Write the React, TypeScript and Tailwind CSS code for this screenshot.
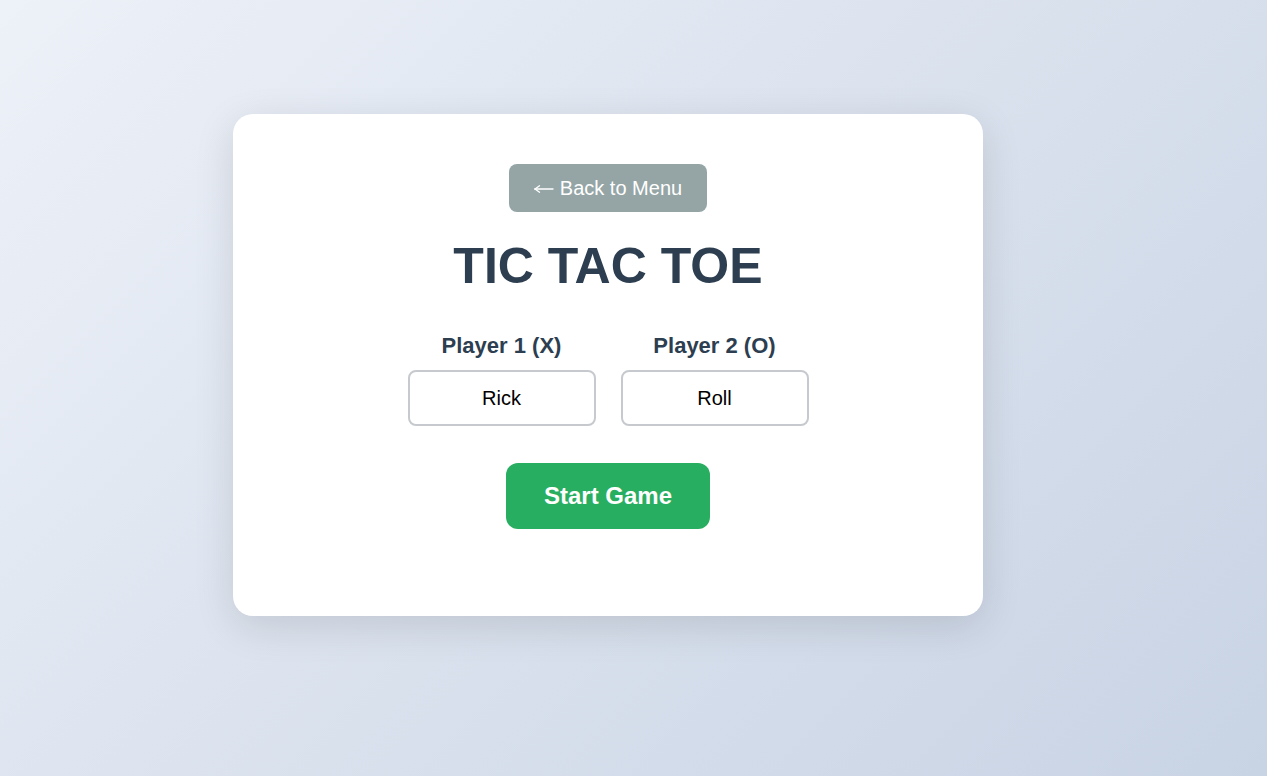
import React, { useState } from 'react';

const App = () => {
  const [p1, setP1] = useState('Rick');
  const [p2, setP2] = useState('Roll');

  return (
    <div className="min-h-screen w-full bg-[linear-gradient(135deg,#edf1f8_0%,#c8d3e4_100%)] pt-[114px] pl-[233px] font-['Liberation_Sans',Arial,sans-serif]">
      <div className="w-[750px] rounded-[20px] bg-white pt-[50px] pb-[87px] flex flex-col items-center shadow-[0_10px_40px_rgba(0,0,0,0.12)]">
        <button className="w-[198px] h-[48px] rounded-[8px] bg-[#95a5a6] text-white text-[20px] leading-none flex items-center justify-center">
          {/* thin long arrow */}
          <svg width="20" height="10" viewBox="0 0 20 10" className="mr-[6px] mt-[2px]" fill="none" stroke="white" strokeWidth="1.4" strokeLinecap="round">
            <path d="M1 5H19" />
            <path d="M1 5L5.5 1.8" />
            <path d="M1 5L5.5 8.2" />
          </svg>
          Back to Menu
        </button>

        <h1 className="mt-[29px] text-[50px] leading-none font-bold text-[#2c3e50]">TIC TAC TOE</h1>

        <div className="mt-[44px] flex gap-[25px]">
          <div className="flex flex-col items-center w-[188px]">
            <label className="text-[22px] leading-none font-bold text-[#2c3e50]">Player 1 (X)</label>
            <input
              value={p1}
              onChange={(e) => setP1(e.target.value)}
              className="mt-[13px] w-[188px] h-[56px] rounded-[8px] border-2 border-[#c6cace] text-center text-[20px] text-black outline-none"
            />
          </div>
          <div className="flex flex-col items-center w-[188px]">
            <label className="text-[22px] leading-none font-bold text-[#2c3e50]">Player 2 (O)</label>
            <input
              value={p2}
              onChange={(e) => setP2(e.target.value)}
              className="mt-[13px] w-[188px] h-[56px] rounded-[8px] border-2 border-[#c6cace] text-center text-[20px] text-black outline-none"
            />
          </div>
        </div>

        <button className="mt-[37px] w-[204px] h-[66px] rounded-[12px] bg-[#27ae60] text-white text-[24px] font-bold leading-none">
          Start Game
        </button>
      </div>
    </div>
  );
};

export default App;
